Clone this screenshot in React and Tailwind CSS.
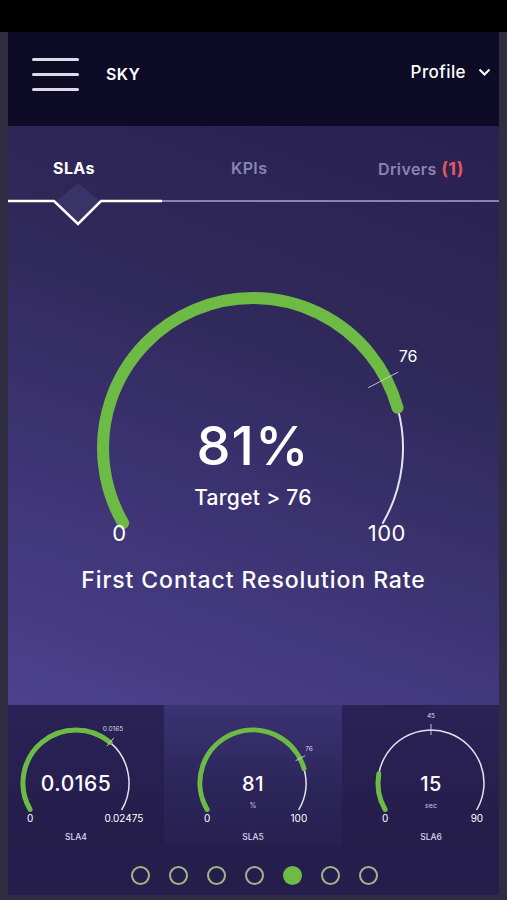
import React from "react";

const font = { fontFamily: "Inter, 'Noto Sans', sans-serif" };

// angle measured from top, clockwise, in degrees
function pt(cx, cy, r, deg) {
  const a = (deg * Math.PI) / 180;
  return [cx + r * Math.sin(a), cy - r * Math.cos(a)];
}

function arc(cx, cy, r, from, to) {
  const [x1, y1] = pt(cx, cy, r, from);
  const [x2, y2] = pt(cx, cy, r, to);
  const large = to - from > 180 ? 1 : 0;
  return `M${x1.toFixed(1)} ${y1.toFixed(1)} A${r} ${r} 0 ${large} 1 ${x2.toFixed(1)} ${y2.toFixed(1)}`;
}

function Gauge({ w, h, cx, cy, r, value, target, green, thin, tickIn, tickOut, children }) {
  const v = -120 + value * 240;
  const t = -120 + target * 240;
  const [ix, iy] = pt(cx, cy, r - tickIn, t);
  const [ox, oy] = pt(cx, cy, r + tickOut, t);
  return (
    <svg width={w} height={h} className="block">
      <path d={arc(cx, cy, r, v, 120)} fill="none" stroke="#e6e3f0" strokeWidth={thin} strokeLinecap="round" />
      <path d={arc(cx, cy, r, -120, v)} fill="none" stroke="#6dbb45" strokeWidth={green} strokeLinecap="round" />
      <line x1={ix} y1={iy} x2={ox} y2={oy} stroke="#d9d6e6" strokeWidth="1" opacity="0.85" />
      {children}
    </svg>
  );
}

const cards = [
  { w: 156, cx: 68, value: 0.0165 / 0.02475, target: 0.0165 / 0.02475, main: "0.0165", unit: "", min: "0", max: "0.02475", tl: "0.0165", tlx: 105, tly: 26, name: "SLA4", mainSize: 21, bg: "bg-[linear-gradient(180deg,#2a2256_0%,#241d4a_100%)]" },
  { w: 178, cx: 89, value: 0.81, target: 0.76, main: "81", unit: "%", min: "0", max: "100", tl: "76", tlx: 145, tly: 46, name: "SLA5", mainSize: 20, bg: "bg-[linear-gradient(180deg,#3b3373_0%,#2c2559_60%,#272050_100%)]" },
  { w: 157, cx: 89, value: 15 / 90, target: 0.5, main: "15", unit: "sec", min: "0", max: "90", tl: "45", tlx: 89, tly: 13, name: "SLA6", mainSize: 20, bg: "bg-[linear-gradient(180deg,#2a2256_0%,#241d4a_100%)]" },
];

function MiniCard({ c }) {
  const cy = 78;
  const r = 53;
  const [mx] = pt(c.cx, cy, r, -120);
  const [Mx] = pt(c.cx, cy, r, 120);
  return (
    <div className={`h-[140px] ${c.bg}`} style={{ width: c.w }}>
      <Gauge w={c.w} h={140} cx={c.cx} cy={cy} r={r} value={c.value} target={c.target} green={5} thin={1.5} tickIn={5} tickOut={6}>
        <text x={c.tlx} y={c.tly} fill="#d8d5e6" fontSize="6.5" textAnchor="middle" style={font}>{c.tl}</text>
        <text x={c.cx} y={cy + 8} fill="#ffffff" fontSize={c.mainSize} fontWeight="500" textAnchor="middle" letterSpacing="0.5" style={font}>{c.main}</text>
        {c.unit && <text x={c.cx} y={cy + 25} fill="#cfcbe0" fontSize="7" textAnchor="middle" style={font}>{c.unit}</text>}
        <text x={mx} y={cy + 39} fill="#ffffff" fontSize="10" textAnchor="middle" style={font}>{c.min}</text>
        <text x={c.name === "SLA4" ? Mx + 2 : Mx} y={cy + 39} fill="#ffffff" fontSize="10" textAnchor="middle" style={font}>{c.max}</text>
        <text x={c.cx} y={cy + 57} fill="#dcd9ea" fontSize="8.5" fontWeight="500" textAnchor="middle" style={font}>{c.name}</text>
      </Gauge>
    </div>
  );
}

export default function App() {
  const cx = 245;
  const cy = 213;
  const r = 150;
  const [sx] = pt(cx, cy, r, -120);
  const [ex] = pt(cx, cy, r, 120);

  return (
    <div className="w-[507px] h-[900px] bg-[#302d42] flex flex-col overflow-hidden" style={font}>
      <div className="h-[32px] bg-black shrink-0" />
      <div className="mx-[8px] w-[491px] h-[863px] flex flex-col">
        {/* header */}
        <div className="h-[94px] bg-[#0e0b27] flex items-center pl-[24px] pr-[8px] pb-[10px]">
          <div className="flex flex-col gap-[12px] w-[47px]">
            <div className="h-[3px] rounded-full bg-[#dcd9e8]" />
            <div className="h-[3px] rounded-full bg-[#dcd9e8]" />
            <div className="h-[3px] rounded-full bg-[#dcd9e8]" />
          </div>
          <div className="ml-[27px] text-[16px] font-semibold text-white tracking-wide">SKY</div>
          <div className="ml-auto flex items-center gap-[12px] -mt-[3px]">
            <span className="text-[17px] font-medium text-white tracking-wide">Profile</span>
            <svg width="13" height="9" viewBox="0 0 13 9">
              <path d="M1.5 1.5 L6.5 6.5 L11.5 1.5" fill="none" stroke="#fff" strokeWidth="2" />
            </svg>
          </div>
        </div>

        {/* main panel */}
        <div className="h-[579px] bg-[linear-gradient(200deg,#272050_0%,#2f2859_35%,#3f3577_70%,#4d418d_100%)] flex flex-col">
          <div className="flex items-center h-[34px] mt-[25px] text-[16px]">
            <div className="w-[164px] pl-[45px] font-bold text-white tracking-wide">SLAs</div>
            <div className="w-[150px] pl-[59px] font-semibold text-[#8a84b2] tracking-wide">KPIs</div>
            <div className="pl-[56px] font-semibold text-[#8a84b2] tracking-wide">
              Drivers <span className="text-[#e0585f] text-[18px] font-bold">(1)</span>
            </div>
          </div>
          <svg width="491" height="48" className="block -mt-[5px]">
            <path d="M48 21 L70 3 L92 21 L70 44 Z" fill="#3a3367" />
            <line x1="154" y1="21" x2="491" y2="21" stroke="#aaa5c8" strokeWidth="1.5" />
            <path d="M0 21 L46 21 L70 44 L93 21 L154 21" fill="none" stroke="#ffffff" strokeWidth="2.5" />
          </svg>
          <div className="mt-[7px]">
            <Gauge w={491} h={320} cx={cx} cy={cy} r={r} value={0.81} target={0.76} green={12} thin={2} tickIn={20} tickOut={14}>
              <text x="400" y="127" fill="#ffffff" fontSize="16" textAnchor="middle" style={font}>76</text>
              <text x={cx} y="230" fill="#ffffff" fontSize="54" fontWeight="500" textAnchor="middle" letterSpacing="1" style={font}>81%</text>
              <text x={cx} y="270" fill="#ffffff" fontSize="21" fontWeight="500" textAnchor="middle" letterSpacing="0.3" style={font}>Target &gt; 76</text>
              <text x={sx - 4} y="306" fill="#ffffff" fontSize="22" textAnchor="middle" style={font}>0</text>
              <text x={ex + 4} y="306" fill="#ffffff" fontSize="22" textAnchor="middle" letterSpacing="0.5" style={font}>100</text>
            </Gauge>
          </div>
          <div className="mt-[8px] text-center text-[23px] font-medium text-white tracking-[0.04em]">First Contact Resolution Rate</div>
        </div>

        {/* mini cards */}
        <div className="flex">
          {cards.map((c) => (
            <MiniCard key={c.name} c={c} />
          ))}
        </div>

        {/* pager */}
        <div className="h-[50px] bg-[#251e4c] flex items-center justify-center gap-[19px] pl-[2px] pt-[10px]">
          {[0, 1, 2, 3, 4, 5, 6].map((i) =>
            i === 4 ? (
              <div key={i} className="w-[19px] h-[19px] rounded-full bg-[#6dbb45]" />
            ) : (
              <div key={i} className="w-[19px] h-[19px] rounded-full border-2 border-[#a3b487]" />
            )
          )}
        </div>
      </div>
    </div>
  );
}
